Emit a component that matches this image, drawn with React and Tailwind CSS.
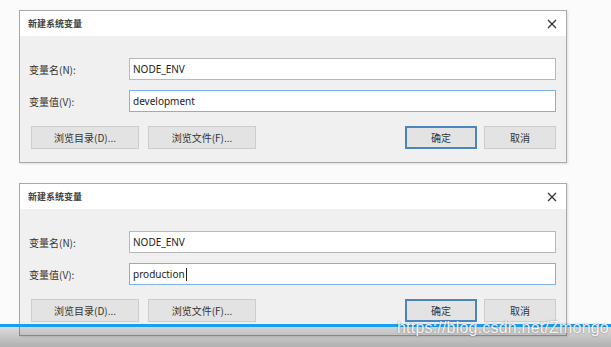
import React from "react";

const CJK = { fontFamily: '"Noto Sans CJK SC", "Noto Sans", sans-serif' };

function CloseIcon() {
  return (
    <svg width="10" height="10" viewBox="0 0 10 10" className="text-[#333]">
      <path d="M1 1 L9 9 M9 1 L1 9" stroke="currentColor" strokeWidth="1.3" />
    </svg>
  );
}

function Btn({ children, primary, w }) {
  return (
    <div
      className={`flex items-center justify-center h-[23px] bg-[#e3e3e3] text-[10px] text-[#333] ${w} ${
        primary ? "border-2 border-[#4a86bd]" : "border border-[#cdcdcd]"
      }`}
      style={CJK}
    >
      {children}
    </div>
  );
}

function Dialog({ value, cursor, mt }) {
  return (
    <div className={`ml-[19px] w-[548px] border border-[#a9a9a9] bg-[#f0f0f0] shadow-[1px_1px_2px_rgba(0,0,0,0.12)] ${mt}`}>
      <div className="h-[25px] bg-white flex items-center justify-between pl-[8px] pr-[9px]">
        <span className="text-[9px] font-bold text-[#444]" style={CJK}>新建系统变量</span>
        <CloseIcon />
      </div>
      <div className="pt-[22px] pb-[13px] pl-[9px] pr-[10px]">
        <div className="flex items-center h-[22px]">
          <span className="w-[100px] text-[10px] text-[#333]" style={CJK}>变量名(N):</span>
          <div className="flex-1 h-[22px] bg-white border border-[#b8b8b8] flex items-center pl-[3px] text-[10px] text-[#222]" style={{ fontFamily: '"Noto Sans", sans-serif' }}>
            NODE_ENV
          </div>
        </div>
        <div className="flex items-center h-[22px] mt-[10px]">
          <span className="w-[100px] text-[10px] text-[#333]" style={CJK}>变量值(V):</span>
          <div className="flex-1 h-[22px] bg-white border border-[#7fb2e0] flex items-center pl-[3px] text-[10px] text-[#222]" style={{ fontFamily: '"Noto Sans", sans-serif' }}>
            {value}
            {cursor && <span className="inline-block w-px h-[13px] bg-[#222] ml-px" />}
          </div>
        </div>
        <div className="flex items-center mt-[14px] pl-[2px]">
          <Btn w="w-[108px]">浏览目录(D)...</Btn>
          <div className="ml-[9px]"><Btn w="w-[108px]">浏览文件(F)...</Btn></div>
          <div className="flex-1" />
          <Btn primary w="w-[72px]">确定</Btn>
          <div className="ml-[7px]"><Btn w="w-[72px]">取消</Btn></div>
        </div>
      </div>
    </div>
  );
}

export default function App() {
  return (
    <div className="relative w-[611px] h-[347px] bg-[#fbfbfb] overflow-hidden">
      <div className="pt-[10px]">
        <Dialog value="development" mt="" />
        <Dialog value="production" cursor mt="mt-[20px]" />
      </div>
      <div className="absolute left-0 right-0 top-[327px] bottom-0 bg-gradient-to-b from-[rgba(0,0,0,0.12)] to-[rgba(0,0,0,0.3)]" />
      <div className="absolute left-0 right-0 top-[324px] h-[3px] bg-[#1a9ef0]" />
      <div
        className="absolute left-[397px] top-[319px] text-[16px] leading-[18px] tracking-[0.2px] text-white/90 [text-shadow:0_0_2px_rgba(0,0,0,0.45)]"
        style={{ fontFamily: '"Liberation Sans", Arial, sans-serif' }}
      >
        https://blog.csdn.net/Zmongo
      </div>
    </div>
  );
}
